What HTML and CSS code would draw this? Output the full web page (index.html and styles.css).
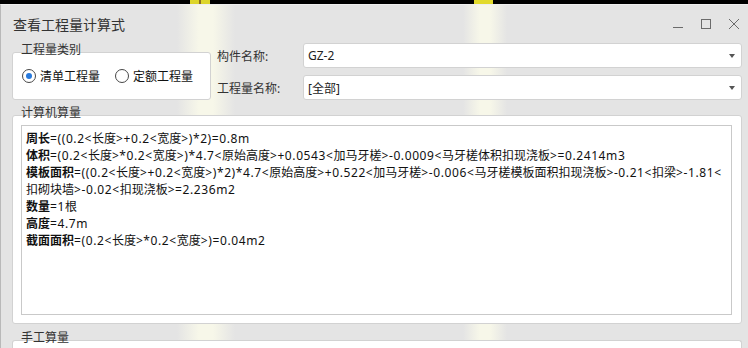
FILE: index.html
```html
<!DOCTYPE html>
<html lang="zh-CN">
<head>
  <meta charset="UTF-8">
  <meta name="viewport" content="width=device-width, initial-scale=1.0">
  <link rel="stylesheet" href="styles.css">
  <title>查看工程量计算式</title>
</head>
<body>

<div class="topbar"></div>
<div class="window">
  <div class="titlebar">
    <div class="title">查看工程量计算式</div>
    <div class="controls">
      <svg width="10" height="10" viewBox="0 0 10 10"><path d="M0 8.5H10" stroke="#6b6b6b" stroke-width="1"/></svg>
      <svg width="10" height="10" viewBox="0 0 10 10"><rect x="0.5" y="0.5" width="9" height="9" fill="none" stroke="#6b6b6b" stroke-width="1"/></svg>
      <svg width="10" height="10" viewBox="0 0 10 10"><path d="M0 0L10 10M10 0L0 10" stroke="#6b6b6b" stroke-width="1"/></svg>
    </div>
  </div>

  <div class="top-section">
    <div class="group type-group">
      <div class="group-title">工程量类别</div>
      <div class="group-box radio-row">
        <label class="radio"><span class="dot checked"></span>清单工程量</label>
        <label class="radio"><span class="dot"></span>定额工程量</label>
      </div>
    </div>
    <div class="fields">
      <div class="field">
        <span class="field-label">构件名称:</span>
        <div class="combo"><span>GZ-2</span><i class="arrow"></i></div>
      </div>
      <div class="field">
        <span class="field-label">工程量名称:</span>
        <div class="combo"><span>[全部]</span><i class="arrow"></i></div>
      </div>
    </div>
  </div>

  <div class="group calc-group">
    <div class="group-title">计算机算量</div>
    <div class="group-box calc-box">
      <div class="formula">
        <div><b>周长</b>=((0.2&lt;<span class="v">长度</span>&gt;+0.2&lt;<span class="v">宽度</span>&gt;)*2)=0.8m</div>
        <div><b>体积</b>=(0.2&lt;<span class="v">长度</span>&gt;*0.2&lt;<span class="v">宽度</span>&gt;)*4.7&lt;<span class="v">原始高度</span>&gt;+0.0543&lt;<span class="v">加马牙槎</span>&gt;-0.0009&lt;<span class="v">马牙槎体积扣现浇板</span>&gt;=0.2414m3</div>
        <div><b>模板面积</b>=((0.2&lt;<span class="v">长度</span>&gt;+0.2&lt;<span class="v">宽度</span>&gt;)*2)*4.7&lt;<span class="v">原始高度</span>&gt;+0.522&lt;<span class="v">加马牙槎</span>&gt;-0.006&lt;<span class="v">马牙槎模板面积扣现浇板</span>&gt;-0.21&lt;<span class="v">扣梁</span>&gt;-1.81&lt;</div>
        <div><span class="v">扣砌块墙</span>&gt;-0.02&lt;<span class="v">扣现浇板</span>&gt;=2.236m2</div>
        <div><b>数量</b>=1<span class="v">根</span></div>
        <div><b>高度</b>=4.7m</div>
        <div><b>截面面积</b>=(0.2&lt;<span class="v">长度</span>&gt;*0.2&lt;<span class="v">宽度</span>&gt;)=0.04m2</div>
      </div>
    </div>
  </div>

  <div class="group manual-group">
    <div class="group-title">手工算量</div>
    <div class="group-box manual-box"></div>
  </div>
</div>

</body>
</html>
```

FILE: styles.css
```css
body {
  margin: 0;
  width: 748px;
  height: 348px;
  overflow: hidden;
  background-color: #000;
  font-family: "Noto Sans", "Noto Sans CJK SC", sans-serif;
  font-size: 12px;
  color: #222;
}

.topbar {
  height: 4px;
  background: linear-gradient(to right,
    #000 190px, #ddd52a 190px, #ddd52a 199px, #8a6d22 199px, #8a6d22 201px,
    #ddd52a 201px, #ddd52a 210px, #000 210px,
    #000 474px, #e2da2c 474px, #e2da2c 493px, #000 493px);
}

.window {
  height: 344px;
  box-sizing: border-box;
  overflow: hidden;
  border-left: 1px solid #b9b9b9;
  border-top: 1px solid #efefef;
  padding: 0 6px 0 11px;
  background: linear-gradient(to right,
    #e4e4e4 176px, #f7f7e9 198px, #f7f7e9 212px, #e4e4e4 234px,
    #e4e4e4 462px, #f7f7e9 479px, #f7f7e9 489px, #e4e4e4 506px);
}

/* Title bar */
.titlebar {
  height: 37px;
  display: flex;
  align-items: center;
  justify-content: space-between;
  margin-right: -6px;
}

.title {
  font-size: 14px;
  color: #333;
  padding-left: 1px;
  font-family: "Noto Sans CJK SC", sans-serif;
}

.controls {
  display: flex;
  gap: 18px;
  margin-right: 9px;
}

/* Group boxes */
.group-title {
  line-height: 16px;
  padding-left: 9px;
  margin-bottom: -6px;
  color: #333;
}

.group-box {
  background-color: #fff;
  border: 1px solid #d2d2d2;
  border-radius: 3px;
}

.top-section {
  display: flex;
  height: 58px;
}

.type-group {
  width: 199px;
}

.radio-row {
  height: 46px;
  display: flex;
  align-items: center;
  padding-left: 9px;
  gap: 15px;
}

.radio {
  display: flex;
  align-items: center;
  gap: 4px;
  color: #111;
}

.dot {
  width: 12px;
  height: 12px;
  border: 1px solid #474747;
  border-radius: 50%;
  background-color: #fff;
  display: flex;
  align-items: center;
  justify-content: center;
}

.dot.checked::after {
  content: "";
  width: 6px;
  height: 6px;
  border-radius: 50%;
  background-color: #2779dc;
}

/* Combo fields */
.fields {
  flex: 1;
  display: flex;
  flex-direction: column;
  gap: 7px;
  padding: 1px 0 0 6px;
}

.field {
  display: flex;
  align-items: center;
}

.field-label {
  width: 86px;
  color: #333;
}

.combo {
  flex: 1;
  height: 23px;
  background-color: #fff;
  border: 1px solid #d2d2d2;
  border-radius: 3px;
  display: flex;
  align-items: center;
  justify-content: space-between;
  padding: 0 6px 0 4px;
  color: #222;
}

.arrow {
  width: 0;
  height: 0;
  border-left: 3px solid transparent;
  border-right: 3px solid transparent;
  border-top: 4px solid #555;
}

/* Computed quantities */
.calc-group {
  margin-top: 5px;
}

.calc-box {
  padding: 9px 9px 8px 8px;
}

.formula {
  height: 190px;
  box-sizing: border-box;
  border: 1px solid #c9c9c9;
  background-color: #fff;
  padding: 4px 4px 0 4px;
  line-height: 17px;
  letter-spacing: 0.6px;
  white-space: nowrap;
  overflow: hidden;
  color: #111;
}

.formula b,
.formula .v {
  letter-spacing: 0;
}

.formula b {
  font-weight: bold;
}

.manual-group {
  margin-top: 6px;
}

.manual-box {
  height: 7px;
  border-bottom: none;
  border-radius: 3px 3px 0 0;
}
```
